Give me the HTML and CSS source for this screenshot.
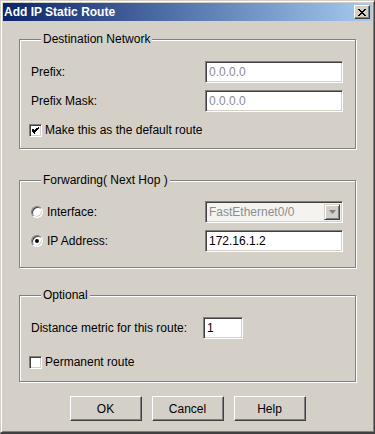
FILE: index.html
```html
<!DOCTYPE html>
<html>
<head>
<meta charset="utf-8">
<link rel="stylesheet" href="styles.css">
</head>
<body>
<div class="window">
  <div class="titlebar">
    <span class="title">Add IP Static Route</span>
    <span class="close">
      <svg width="8" height="7" viewBox="0 0 8 7"><path d="M0 0h2v1h-2zM6 0h2v1h-2zM1 1h2v1h-2zM5 1h2v1h-2zM2 2h4v1h-4zM3 3h2v1h-2zM2 4h4v1h-4zM1 5h2v1h-2zM5 5h2v1h-2zM0 6h2v1h-2zM6 6h2v1h-2z" fill="#000"/></svg>
    </span>
  </div>
  <div class="body">
    <fieldset class="group g1">
      <legend>Destination Network</legend>
      <div class="row">
        <span class="label">Prefix:</span>
        <span class="input disabled">0.0.0.0</span>
      </div>
      <div class="row">
        <span class="label">Prefix Mask:</span>
        <span class="input disabled">0.0.0.0</span>
      </div>
      <div class="row check-row">
        <span class="checkbox">
          <svg width="7" height="7" viewBox="0 0 7 7"><path d="M6 0h1v1h-1zM5 1h2v1h-2zM0 2h1v1h-1zM4 2h2v1h-2zM0 3h2v1h-2zM3 3h2v1h-2zM0 4h4v1h-4zM1 5h2v1h-2zM2 6h1v1h-1zM1 4h3v1h-3z" fill="#000"/><path d="M4 1h1v1h-1zM3 2h1v1h-1zM2 3h1v1h-1zM1 2h1v1h-1zM2 5h1v1h-1z" fill="#000"/></svg>
        </span>
        <span class="check-label">Make this as the default route</span>
      </div>
    </fieldset>

    <fieldset class="group g2">
      <legend>Forwarding( Next Hop )</legend>
      <div class="row">
        <span class="radio"></span>
        <span class="radio-label">Interface:</span>
        <span class="combo">
          <span class="combo-text">FastEthernet0/0</span>
          <span class="combo-btn"><svg width="7" height="4" viewBox="0 0 7 4"><path d="M0 0h7l-3.5 4z" fill="#808080"/></svg></span>
        </span>
      </div>
      <div class="row">
        <span class="radio checked"><span class="dot"></span></span>
        <span class="radio-label">IP Address:</span>
        <span class="input">172.16.1.2</span>
      </div>
    </fieldset>

    <fieldset class="group g3">
      <legend>Optional</legend>
      <div class="row">
        <span class="label dist-label">Distance metric for this route:</span>
        <span class="input small">1</span>
      </div>
      <div class="row check-row">
        <span class="checkbox"></span>
        <span class="check-label">Permanent route</span>
      </div>
    </fieldset>

    <div class="buttons">
      <span class="btn">OK</span>
      <span class="btn">Cancel</span>
      <span class="btn">Help</span>
    </div>
  </div>
</div>
</body>
</html>
```

FILE: styles.css
```css
html, body {
  margin: 0;
  padding: 0;
  background: #d4d0c8;
}
body {
  font-family: "Liberation Sans", Arial, sans-serif;
  font-size: 12px;
  color: #000;
}
.window {
  width: 375px;
  height: 434px;
  box-sizing: border-box;
  background: #d4d0c8;
  border-style: solid;
  border-width: 1px 1px 2px 1px;
  border-color: #d4d0c8 #404040 #404040 #d4d0c8;
  box-shadow: inset 1px 1px 0 #fff, inset -1px -1px 0 #808080;
  padding: 2px 2px 0 2px;
  display: flex;
  flex-direction: column;
}
.titlebar {
  height: 18px;
  background: linear-gradient(to right, #0a246a, #a6caf0);
  display: flex;
  align-items: center;
  justify-content: space-between;
  padding: 0 2px 0 1px;
}
.title {
  color: #fff;
  font-weight: bold;
  font-size: 12px;
  line-height: 14px;
}
.close {
  width: 16px;
  height: 14px;
  box-sizing: border-box;
  background: #d4d0c8;
  border: 1px solid;
  border-color: #fff #404040 #404040 #fff;
  box-shadow: inset -1px -1px 0 #808080;
  display: flex;
  align-items: center;
  justify-content: center;
  padding-right: 1px;
}
.close svg { display: block; }
.body {
  padding: 0 0 0 16px;
  display: flex;
  flex-direction: column;
}
.group {
  width: 337px;
  box-sizing: border-box;
  margin: 0;
  border: 1px solid #808080;
  box-shadow: inset 1px 1px 0 #fff, 1px 1px 0 #fff;
  padding: 0 12px 0 11px;
  display: flex;
  flex-direction: column;
  gap: 7px;
}
.group legend {
  margin-left: 10px;
  padding: 0 2px;
  line-height: 14px;
  background: #d4d0c8;
  font-size: 12px;
}
.g1 { margin-top: 11px; padding-top: 15px; padding-bottom: 7px; }
.g2 { margin-top: 24px; padding-top: 14px; padding-bottom: 15px; }
.g3 { margin-top: 20px; padding-top: 15px; padding-bottom: 8px; gap: 12px; }
.row {
  display: flex;
  align-items: center;
  height: 22px;
}
.label {
  width: 174px;
  flex: none;
}
.dist-label { width: 172px; }
.input {
  width: 138px;
  height: 22px;
  box-sizing: border-box;
  background: #fff;
  border: 1px solid;
  border-color: #808080 #fff #fff #808080;
  box-shadow: inset 1px 1px 0 #404040, inset -1px -1px 0 #d4d0c8;
  padding: 0 3px;
  line-height: 20px;
  color: #000;
}
.input.disabled { color: #8c8c8c; }
.input.small { width: 40px; }
.check-row { margin-left: -2px; }
.checkbox {
  width: 13px;
  height: 13px;
  box-sizing: border-box;
  background: #fff;
  border: 1px solid;
  border-color: #808080 #fff #fff #808080;
  box-shadow: inset 1px 1px 0 #404040, inset -1px -1px 0 #d4d0c8;
  display: flex;
  align-items: center;
  justify-content: center;
  flex: none;
}
.checkbox svg { display: block; }
.check-label { margin-left: 3px; }
.radio {
  width: 12px;
  height: 12px;
  box-sizing: border-box;
  border-radius: 50%;
  background: #fff;
  border: 1px solid;
  border-color: #808080 #fff #fff #808080;
  box-shadow: inset 1px 1px 0 #404040, inset -1px -1px 0 #d4d0c8;
  display: flex;
  align-items: center;
  justify-content: center;
  flex: none;
}
.radio .dot {
  width: 4px;
  height: 4px;
  border-radius: 50%;
  background: #000;
}
.radio-label { width: 158px; margin-left: 4px; }
.combo {
  width: 138px;
  height: 22px;
  box-sizing: border-box;
  background: #f4f3f0;
  border: 1px solid;
  border-color: #808080 #fff #fff #808080;
  box-shadow: inset 1px 1px 0 #404040, inset -1px -1px 0 #d4d0c8;
  display: flex;
  align-items: center;
  padding: 2px 2px 2px 3px;
}
.combo-text {
  flex: 1;
  color: #8c8c8c;
}
.combo-btn {
  width: 16px;
  height: 16px;
  box-sizing: border-box;
  background: #d4d0c8;
  border: 1px solid;
  border-color: #d4d0c8 #404040 #404040 #d4d0c8;
  box-shadow: inset 1px 1px 0 #fff, inset -1px -1px 0 #808080;
  display: flex;
  align-items: center;
  justify-content: center;
}
.combo-btn svg { display: block; }
.buttons {
  display: flex;
  justify-content: center;
  gap: 10px;
  margin-top: 14px;
  margin-left: -16px;
}
.btn {
  width: 72px;
  height: 25px;
  box-sizing: border-box;
  border: 1px solid;
  border-color: #fff #404040 #404040 #fff;
  box-shadow: inset -1px -1px 0 #808080;
  display: flex;
  align-items: center;
  justify-content: center;
}
```
